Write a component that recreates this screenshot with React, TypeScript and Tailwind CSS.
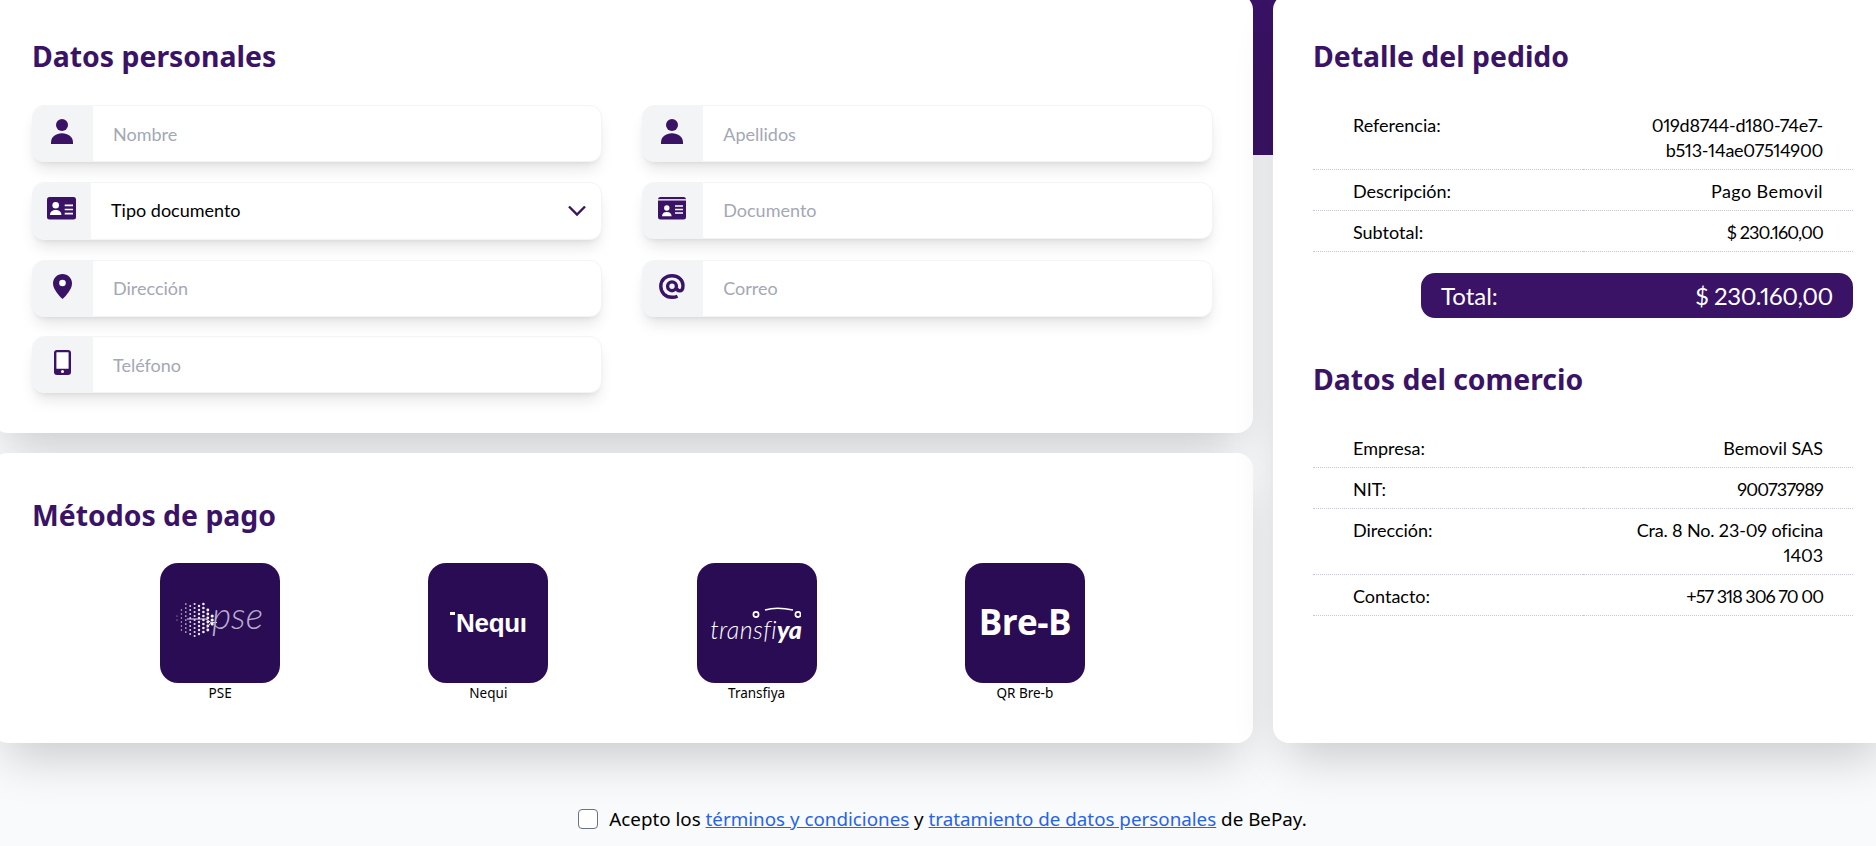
import React from "react";

const purple = "#3a1366";

function UserIcon() {
  return (
    <svg width="22" height="25" viewBox="0 0 22 25" fill={purple}>
      <circle cx="11" cy="6" r="6" />
      <path d="M0 25v-1.500C0 17.800 5 14.300 11 14.300s11 3.500 11 9.200V25z" />
    </svg>
  );
}
function CardA() {
  return (
    <svg width="29" height="23" viewBox="0 0 29 23">
      <rect width="29" height="22.500" rx="2.500" fill={purple} />
      <circle cx="8.700" cy="8.300" r="3.300" fill="#fff" />
      <path d="M3 18c0-3.200 2.500-5 5.700-5s5.700 1.800 5.700 5z" fill="#fff" />
      <path d="M17.700 8.300h8.300M17.700 12.500h8.300M17.700 16.700h8.300" stroke="#fff" strokeWidth="1.700" />
    </svg>
  );
}
function CardB() {
  return (
    <svg width="28" height="23" viewBox="0 0 28 23">
      <rect width="28" height="22.500" rx="2.500" fill={purple} />
      <rect y="2.200" width="28" height="1.300" fill="#fff" />
      <circle cx="8.800" cy="11" r="2.700" fill="#fff" />
      <path d="M4 19.300c0-2.900 2-4.300 4.800-4.300s4.800 1.400 4.800 4.300z" fill="#fff" />
      <path d="M17 9h8M17 12.500h8M17 16h8" stroke="#fff" strokeWidth="1.500" />
    </svg>
  );
}
function PinIcon() {
  return (
    <svg width="19" height="25" viewBox="0 0 19 25">
      <path d="M9.500 0C4.200 0 0 4.200 0 9.400c0 5.600 6.200 12.600 9.500 15.600 3.300-3 9.500-10 9.500-15.600C19 4.200 14.800 0 9.500 0z" fill={purple} />
      <circle cx="9.500" cy="9" r="3.300" fill="#fff" />
    </svg>
  );
}
function AtIcon() {
  return (
    <svg width="26" height="25" viewBox="0 0 26 25" fill="none" stroke={purple} strokeWidth="3.400">
      <path d="M18.500 22.200c-1.700.8-3.500 1.100-5.500 1.100C6.500 23.300 1.800 18.700 1.800 12.300S6.800 1.700 13 1.700s11 4.100 11 9.700c0 3.300-1.400 5.400-3.500 5.400-1.800 0-2.700-1.100-2.700-3" />
      <circle cx="13" cy="12.300" r="4.400" />
    </svg>
  );
}
function PhoneIcon() {
  return (
    <svg width="17" height="25" viewBox="0 0 17 25">
      <rect width="17" height="25" rx="3" fill={purple} />
      <rect x="2.400" y="2.200" width="12.200" height="16.500" rx="0.500" fill="#fff" />
      <circle cx="8.500" cy="21.500" r="1.500" fill="#fff" />
    </svg>
  );
}

function Field({ icon, placeholder }: { icon: React.ReactNode; placeholder: string }) {
  return (
    <div className="flex h-[57px] overflow-hidden rounded-xl border border-gray-100 bg-white shadow-lg">
      <div className="flex w-[60px] shrink-0 items-center justify-center bg-[#f3f4f6] pb-[4px] pr-[2px]">{icon}</div>
      <div className="flex flex-1 items-center pl-[20px] pt-[1px] text-[18px] text-[#a4a7b5]">{placeholder}</div>
    </div>
  );
}

function SelectField() {
  return (
    <div className="flex h-[58px] overflow-hidden rounded-xl border border-gray-100 bg-white shadow-lg">
      <div className="flex w-[58px] shrink-0 items-center justify-center bg-[#f3f4f6] pb-[4px] pr-[2px]">
        <CardA />
      </div>
      <div className="flex flex-1 items-center justify-between pl-[20px] pr-[15px] text-[18px] text-black">
        <span>Tipo documento</span>
        <svg width="18" height="12" viewBox="0 0 18 12" fill="none" stroke={purple} strokeWidth="2.400">
          <path d="M1 1.500l8 8 8-8" />
        </svg>
      </div>
    </div>
  );
}

function Row({ label, value = "", children }: { label: string; value?: string; children: React.ReactNode }) {
  return (
    <div className="grid grid-cols-2 text-[18px] leading-[25px] text-black proportional-nums">
      <div className="border-b border-dotted border-[#c8c8d4] pb-[6px] pl-[40px] pt-[9px]">{label}</div>
      <div className="flex justify-end border-b border-dotted border-[#c8c8d4] pb-[6px] pr-[30px] pt-[9px]">
        <div className={"w-[200px] text-right " + value}>{children}</div>
      </div>
    </div>
  );
}

function Heading({ children }: { children: React.ReactNode }) {
  return <h2 className="text-[28.400px] font-bold leading-[34px] text-[#3a1366] [font-family:'Noto_Sans',sans-serif]">{children}</h2>;
}

function PseLogo() {
  const dots: React.ReactNode[] = [];
  for (let c = 0; c < 9; c++) {
    for (let r = -4; r <= 4; r++) {
      const x = c * 4.400 + 2;
      const y = 29 + r * 4 + (c % 2 ? 2 : 0);
      const d = Math.hypot(x - 20, y - 28.500);
      if (d > 18.500) continue;
      dots.push(<circle key={c + "-" + r} cx={x} cy={y} r={0.6 + c * 0.12} fill="#fff" opacity={0.75 + c * 0.03} />);
    }
  }
  return (
    <svg width="96" height="80" viewBox="0 -8 96 80" className="ml-[6px]">
      {dots}
      <path d="M12 28h19l5 3.500-4 5M36 31.500h6" fill="none" stroke="#e4def0" strokeWidth="1" />
      <text x="37" y="38" fontFamily="Lato, sans-serif" fontStyle="italic" fontWeight="300" fontSize="37" fill="#b9aecb">pse</text>
    </svg>
  );
}

function NequiLogo() {
  return (
    <div className="flex items-start text-[26px] font-bold leading-none tracking-[-0.3px] text-white [font-family:'Liberation_Sans',sans-serif]">
      <span className="mr-[1px] mt-[2px] h-[3px] w-[5px] bg-white" />
      <span>Nequı</span>
    </div>
  );
}

function TransfiyaLogo() {
  return (
    <div className="-ml-[2px] flex w-[91px] flex-col items-stretch">
      <svg width="91" height="14" viewBox="0 0 91 14" className="-mb-[3px]" fill="none" stroke="#fff">
        <circle cx="46" cy="9.500" r="2.600" strokeWidth="1.700" />
        <circle cx="88" cy="9.500" r="2.600" strokeWidth="1.700" />
        <path d="M55 5c7-2.200 18-2.200 28 0" strokeWidth="1.500" />
      </svg>
      <div className="whitespace-nowrap text-center text-[25px] italic leading-[26px] text-white">
        <span className="font-light tracking-[0.4px]">transfi</span>
        <span className="font-black">ya</span>
      </div>
    </div>
  );
}

function BreLogo() {
  return (
    <span className="pb-[4px] text-[35px] font-bold leading-none tracking-[-0.5px] text-white [font-family:'Open_Sans',sans-serif]">
      Bre-B
    </span>
  );
}

function Method({ label, children }: { label: string; children: React.ReactNode }) {
  return (
    <div className="flex flex-col items-center">
      <div className="flex h-[120px] w-[120px] items-center justify-center rounded-[18px] bg-[#2a0c55]">{children}</div>
      <div className="mt-[1px] text-[13.500px] leading-[19px] text-black [font-family:'Noto_Sans',sans-serif]">{label}</div>
    </div>
  );
}

export default function App() {
  const cardShadow = "shadow-[0_25px_50px_-12px_rgba(0,0,0,0.2)]";
  return (
    <div className="h-[846px] w-[1876px] overflow-hidden bg-[#f9fafb] [font-family:'Lato',sans-serif]">
      <div className="-ml-[8px] -mt-[6px] w-[1901px] bg-[linear-gradient(#3a1366_161px,#f9fafb_161px)]">
        <div className="flex gap-[20px]">
          <div className="flex w-[1261px] flex-col gap-[20px]">
            <section className={"h-[439px] rounded-2xl bg-white pl-[40px] pr-[40.500px] pt-[45px] " + cardShadow}>
              <Heading>Datos personales</Heading>
              <div className="mt-[32px] grid grid-cols-2 gap-x-[40px] gap-y-[19.800px]">
                <Field icon={<UserIcon />} placeholder="Nombre" />
                <Field icon={<UserIcon />} placeholder="Apellidos" />
                <SelectField />
                <Field icon={<CardB />} placeholder="Documento" />
                <Field icon={<PinIcon />} placeholder="Dirección" />
                <Field icon={<AtIcon />} placeholder="Correo" />
                <Field icon={<PhoneIcon />} placeholder="Teléfono" />
              </div>
            </section>
            <section className={"h-[290px] rounded-2xl bg-white px-[40px] pt-[45px] " + cardShadow}>
              <Heading>Métodos de pago</Heading>
              <div className="mx-auto mt-[31px] grid w-[1073px] grid-cols-4">
                <Method label="PSE"><PseLogo /></Method>
                <Method label="Nequi"><NequiLogo /></Method>
                <Method label="Transfiya"><TransfiyaLogo /></Method>
                <Method label="QR Bre-b"><BreLogo /></Method>
              </div>
            </section>
          </div>
          <section className={"h-[749px] flex-1 rounded-2xl bg-white px-[40px] pt-[45px] " + cardShadow}>
            <Heading>Detalle del pedido</Heading>
            <div className="mt-[31px]">
              <Row label="Referencia:" value="tracking-[-0.3px]">019d8744-d180-74e7-b513-14ae07514900</Row>
              <Row label="Descripción:" value="tracking-[0.4px]">Pago Bemovil</Row>
              <Row label="Subtotal:" value="tracking-[-0.9px]">$ 230.160,00</Row>
            </div>
            <div className="ml-auto mt-[21px] flex h-[45px] w-[432px] items-center justify-between rounded-[14px] bg-[#3a1366] px-[20px] text-[24px] text-white proportional-nums">
              <span>Total:</span>
              <span className="tracking-[-0.4px]">$ 230.160,00</span>
            </div>
            <div className="mt-[44px]">
              <Heading>Datos del comercio</Heading>
            </div>
            <div className="mt-[31px]">
              <Row label="Empresa:">Bemovil SAS</Row>
              <Row label="NIT:" value="tracking-[-0.8px]">900737989</Row>
              <Row label="Dirección:" value="tracking-[-0.15px]">Cra. 8 No. 23-09 oficina 1403</Row>
              <Row label="Contacto:" value="tracking-[-1px]">+57 318 306 70 00</Row>
            </div>
          </section>
        </div>
        <div className="mt-[62px] flex items-center justify-center text-[18.800px] text-black [font-family:'Noto_Sans',sans-serif]">
          <input type="checkbox" className="mr-[11px] h-[20px] w-[20px] appearance-none rounded-[4px] border border-[#6b7280] bg-white" />
          <span>
            Acepto los <a href="#" className="text-[#2563eb] underline">términos y condiciones</a> y{" "}
            <a href="#" className="text-[#2563eb] underline">tratamiento de datos personales</a> de BePay.
          </span>
        </div>
      </div>
    </div>
  );
}
